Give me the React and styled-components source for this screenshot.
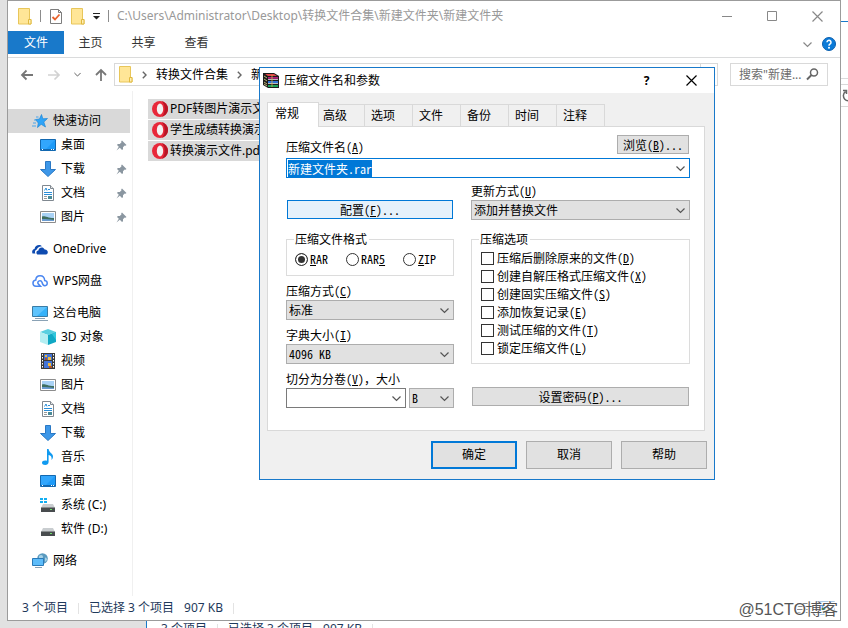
import { useEffect, useRef, useState } from "react";
import styled, { createGlobalStyle, css } from "styled-components";

const GlobalStyle = createGlobalStyle`
  * {
    box-sizing: border-box;
  }
  body {
    margin: 0;
    overflow: hidden;
    font-family: "Noto Sans", "Noto Sans CJK SC", sans-serif;
    font-size: 12px;
    line-height: 16px;
    color: #000;
  }
  button, input, select {
    margin: 0;
    padding: 0;
    border: 0;
    border-radius: 0;
    background: none;
    font: inherit;
    color: inherit;
    outline: none;
  }
  svg {
    display: block;
    flex: none;
  }
`;

/* ---------- icons ---------- */

const FolderIcon = () => (
  <svg width="14" height="17" viewBox="0 0 14 17">
    <path d="M.5.5h11v11h1.500v4.500H.5z" fill="#ffe697" stroke="#e8c65a" />
    <path d="M10.500 16v-4.500h2.500V16z" fill="#ffefb5" stroke="#e0b93f" />
  </svg>
);

const CheckDocIcon = () => (
  <svg width="14" height="17" viewBox="0 0 14 17">
    <path d="M1.500 1.500h8l3 3v11h-11z" fill="#fff" stroke="#7d7d7d" />
    <path d="M9.500 1.500v3h3" fill="none" stroke="#7d7d7d" />
    <path d="M3.500 9l2.500 2.500L10.500 6.500" fill="none" stroke="#e8622c" strokeWidth="1.800" />
  </svg>
);

const MenuCaret = () => (
  <svg width="7" height="8" viewBox="0 0 7 8">
    <path d="M0 1h7v1H0zM0 4h7L3.500 7.500z" fill="#222" />
  </svg>
);

const ArrowIcon = ({ up, color = "#777" }) => (
  <svg width="14" height="14" viewBox="0 0 14 14">
    <path
      d={up ? "M7 13V2M2 7l5-5 5 5" : "M13 7H2M6.500 2.500L2 7l4.500 4.500"}
      fill="none"
      stroke={color}
      strokeWidth="1.800"
    />
  </svg>
);

const ForwardIcon = () => (
  <svg width="14" height="14" viewBox="0 0 14 14">
    <path d="M1 7h11M7.500 2.500L12 7l-4.500 4.500" fill="none" stroke="#d2d2d2" strokeWidth="1.700" />
  </svg>
);

const Chevron = ({ color = "#555", size = 9 }) => (
  <svg width={size} height={size} viewBox="0 0 9 9">
    <path d="M.5 2.500l4 4 4-4" fill="none" stroke={color} strokeWidth="1.200" />
  </svg>
);

const Crumb = () => (
  <svg width="5" height="8" viewBox="0 0 5 8">
    <path d="M.8.8L4 4 .8 7.200" fill="none" stroke="#666" strokeWidth="1.400" />
  </svg>
);

const SearchIcon = () => (
  <svg width="13" height="13" viewBox="0 0 13 13">
    <circle cx="8" cy="4.500" r="3.500" fill="none" stroke="#666" strokeWidth="1.500" />
    <path d="M5.500 7L1 11.500" stroke="#666" strokeWidth="2" />
  </svg>
);

const RefreshIcon = () => (
  <svg width="13" height="13" viewBox="0 0 13 13">
    <path d="M9 2.500a5 5 0 1 1-5.500.2M1 1.500h3.500V5" fill="none" stroke="#666" strokeWidth="1.500" />
  </svg>
);

const HelpIcon = () => (
  <svg width="14" height="14" viewBox="0 0 14 14">
    <circle cx="7" cy="7" r="6.500" fill="#0c7bd8" stroke="#0a5fae" />
    <path d="M5 5.300a2 2 0 1 1 3.200 1.600C7.300 7.500 7 7.800 7 8.700" fill="none" stroke="#fff" strokeWidth="1.500" />
    <circle cx="7" cy="10.700" r="1" fill="#fff" />
  </svg>
);

const PinIcon = () => (
  <svg width="11" height="11" viewBox="0 0 11 11">
    <path d="M6 .5L10.500 5l-1 .8-.8-.3L7 7.200v2l-1 .8-2.200-2.200L.5 10.500l2.300-3.800L1 5l.8-1h2L5.500 2.300 5.200 1.300z" fill="#8a96a0" />
  </svg>
);

const StarIcon = () => (
  <svg width="16" height="16" viewBox="0 0 16 16">
    <path d="M9.500 1.500l1.300 4.300 4.700-.3-3.700 3.500 1.700 5-4.300-2.700L5.500 14.500l.8-4.500L3.500 6.500l4-.5z" fill="#2ea4f8" stroke="#1f86d6" strokeWidth=".7" />
    <path d="M4 4h2.500M2 7h2M1 10h3M0 13h4" stroke="#4aa5ea" />
  </svg>
);

const DesktopIcon = () => (
  <svg width="16" height="16" viewBox="0 0 16 16">
    <path d="M.5 2.500h15v11H.5z" fill="#1e9bf8" stroke="#1268b0" />
    <path d="M1 3l14 0L6 12H1z" fill="#46b2ff" opacity=".5" />
    <path d="M1 12h14v1H1z" fill="#1268b0" />
    <path d="M2 12h1v1H2zM11 12h1v1h-1zM13 12h1v1h-1z" fill="#fff" />
  </svg>
);

const DownloadIcon = () => (
  <svg width="16" height="16" viewBox="0 0 16 16">
    <path d="M5.500.5h5v8h5L8 15.500.5 8.500h5z" fill="#3d97e8" stroke="#2a78c4" />
  </svg>
);

const DocumentIcon = () => (
  <svg width="16" height="16" viewBox="0 0 16 16">
    <path d="M2.500.5h8l3 3v12h-11z" fill="#fff" stroke="#808890" />
    <path d="M10.500.5v3h3" fill="#e8e8e8" stroke="#808890" />
    <path d="M4.500 5.500l1.500-2.500 1 2.500M8 4.500h2M4 7.500h8M4 9.500h8" fill="none" stroke="#2a8ed8" />
    <path d="M4 11.500h3M4 13.500h3" stroke="#999" />
    <path d="M8 11h4v3H8z" fill="#4a8a96" />
  </svg>
);

const PictureIcon = () => (
  <svg width="16" height="16" viewBox="0 0 16 16">
    <path d="M.5 2.500h15v11H.5z" fill="#fff" stroke="#8c8c8c" />
    <path d="M2 4h12v8H2z" fill="#a9d2f5" />
    <path d="M2 7.500c3-1 5 1.500 12 1.500v2H2z" fill="#3f6f60" />
    <path d="M2 10c4 0 8 0 12 1v1H2z" fill="#6a9bd0" />
  </svg>
);

const OneDriveIcon = () => (
  <svg width="16" height="16" viewBox="0 0 16 16">
    <path d="M.5 12.500c-1-2.500.2-4.300 2-4.600C3 4.500 7.500 2.600 10 5.300 6 5.500 5 8 5 8.600c-2 .4-2.500 2.400-1.600 3.900z" fill="#0e4bb0" />
    <path d="M6 13.500c-2-.2-2.400-3.500.4-3.900C6.800 6.300 11 5 12.700 8.600c3.600-.1 4.100 4.500 1.300 4.900z" fill="#0e4bb0" />
  </svg>
);

const WpsIcon = () => (
  <svg width="16" height="16" viewBox="0 0 16 16">
    <path d="M4 13.200h4.500L6 10.500C5 8 9 6.500 10 9.200c.5 2 1 3.800 3 3.500 3-.5 3-4.700-.3-5.200C12.300 1 4 1.300 3.800 7 0 7.500 0 13 4 13.200z" fill="none" stroke="#4a86f0" strokeWidth="1.500" />
  </svg>
);

const ComputerIcon = () => (
  <svg width="16" height="16" viewBox="0 0 16 16">
    <path d="M.5 1.500h15v10H.5z" fill="#35b2fa" stroke="#3a7ca5" />
    <path d="M1 2h14L5 11H1z" fill="#7cd0ff" opacity=".6" />
    <path d="M3 13.500h10M0 15.500h16" stroke="#8aa2b5" />
  </svg>
);

const CubeIcon = () => (
  <svg width="16" height="16" viewBox="0 0 16 16">
    <path d="M0 3l8-3 8 3-8 3z" fill="#59cfe0" />
    <path d="M0 3l8 3v10l-8-3z" fill="#b4eef2" />
    <path d="M16 3L8 6v10l8-3z" fill="#10a8c4" />
    <path d="M12 5l4-2v8z" fill="#30c6dc" />
  </svg>
);

const VideoIcon = () => (
  <svg width="16" height="16" viewBox="0 0 16 16">
    <path d="M1 0h14v16H1z" fill="#3a3a3a" />
    <path d="M2.500 1v14M13.500 1v14" stroke="#fff" strokeDasharray="1.500 1.500" />
    <path d="M4 1h8v6H4zM4 8h8v7H4z" fill="#4274d8" />
    <path d="M5 2h2v2H5zM8 4h3v3H8zM8 10h3v3H8z" fill="#f0b93c" />
    <path d="M5 5h2v2H5zM9 13h3v2H9z" fill="#b0552c" />
  </svg>
);

const MusicIcon = () => (
  <svg width="16" height="16" viewBox="0 0 16 16">
    <path d="M7 0h1.600c.4 4 4.400 4 4.400 7.500 0 1.500-.6 2.800-1.500 3.500.6-3-.6-4.600-2.900-5V13c0 2-1.600 3-3.400 3C3.500 16 2 15 2 13.700 2 11.800 4.500 11 7 11.700z" fill="#109af0" />
  </svg>
);

const DriveIcon = ({ system }) => (
  <svg width="16" height="16" viewBox="0 0 16 16">
    <path d="M3 7h10l2 4H1z" fill="#c9cdd0" />
    <path d="M1 10.500h14v4.500H1z" fill="#484c4e" />
    <path d="M10 12h2v1h-2z" fill="#6ee06a" />
    {system && <path d="M0 1h3v2H0zM4 1h3v2H4zM0 4h3v2H0zM4 4h3v2H4z" fill="#12aef2" />}
  </svg>
);

const NetworkIcon = () => (
  <svg width="16" height="16" viewBox="0 0 16 16">
    <circle cx="10.500" cy="5.500" r="5.300" fill="#5a9abf" />
    <path d="M7 3c2-2 4-1 4 1s-3 3-4 2zM13 5c1-1 2 0 2 2l-2 2z" fill="#a8d2e6" />
    <path d="M.5 5.500h11v7H.5z" fill="#5dbcfa" stroke="#2a7ab8" />
    <path d="M3 14.500h7" stroke="#8aa2b5" />
  </svg>
);

const OperaIcon = () => (
  <svg width="16" height="16" viewBox="0 0 16 16">
    <circle cx="8" cy="8" r="8" fill="#e8283a" />
    <path d="M10 .3c8 2.700 8 12.700 0 15.400 3.500-4 3.500-11.400 0-15.400z" fill="#b81526" />
    <ellipse cx="8" cy="8" rx="3.200" ry="5.400" fill="#f2f2f2" />
  </svg>
);

const RarIcon = () => (
  <svg width="16" height="16" viewBox="0 0 16 16">
    <path d="M0 0h11l5 3v12H5L0 12z" fill="#1c1c1c" />
    <path d="M2 1h9l3 2H5z" fill="#e04848" />
    <path d="M5 4h10v1.800H5z" fill="#b0207c" />
    <path d="M5 8h10v2H5z" fill="#2f70d4" />
    <path d="M5 12h10v2H5z" fill="#18a058" />
    <path d="M5 6h10v.8H5zM5 10.200h10v.8H5z" fill="#eee" />
    <path d="M1 3l3 2M1 6l3 2M1 9l3 2M1 11l3 2" stroke="#e8dc8c" strokeWidth=".8" />
    <path d="M8 2h2v12H8z" fill="#d8b04c" opacity=".4" />
  </svg>
);

const CloseIcon = ({ color, size = 11 }) => (
  <svg width={size} height={size} viewBox="0 0 11 11">
    <path d="M.5.5l10 10M10.500.5l-10 10" stroke={color} strokeWidth="1.200" />
  </svg>
);

const MinimizeIcon = () => (
  <svg width="11" height="11" viewBox="0 0 11 11">
    <path d="M0 5.500h10" stroke="#888" />
  </svg>
);

const MaximizeIcon = () => (
  <svg width="11" height="11" viewBox="0 0 11 11">
    <path d="M.5.5h9v9h-9z" fill="none" stroke="#888" />
  </svg>
);

const ViewIcons = () => (
  <svg width="40" height="14" viewBox="0 0 40 14">
    <path d="M1 2.500h11M1 5.500h11M1 8.500h11M1 11.500h11" stroke="#8a8a8a" />
    <path d="M20.500.5h18v13h-18z" fill="#e5f3ff" stroke="#a9c9e6" />
    <path d="M23 3h10v6H23z" fill="#5a98d4" />
    <path d="M23 7h10v2H23z" fill="#3f7d58" />
  </svg>
);

/* ---------- desktop and windows ---------- */

const Desktop = styled.div`
  position: relative;
  height: 100vh;
  overflow: hidden;
  background: linear-gradient(to right, #e1e1e1 50%, #fff 50%);
`;

const ExplorerWindow = styled.div`
  position: absolute;
  top: 0;
  right: 7px;
  bottom: 7px;
  left: 7px;
  display: flex;
  flex-direction: column;
  background: #fff;
  border: 1px solid #9b9b9b;
  ${({ $back }) =>
    $back &&
    css`
      top: 21px;
      right: -132px;
      bottom: -14px;
      left: 146px;
      border-color: #1979ca;
    `}
`;

const TitleBar = styled.div`
  display: flex;
  align-items: center;
  height: 30px;
  padding-left: 10px;
  color: #999;
`;

const QuickTools = styled.div`
  display: flex;
  align-items: center;
  gap: 8px;
  margin-right: 8px;
`;

const Rule = styled.span`
  width: 1px;
  height: ${({ $height = 12 }) => $height}px;
  background: ${({ $color = "#8c8c8c" }) => $color};
`;

const WindowButtons = styled.div`
  display: flex;
  margin-left: auto;
`;

const WindowButton = styled.button`
  display: flex;
  align-items: center;
  justify-content: center;
  width: 45px;
  height: 28px;
`;

const Ribbon = styled.div`
  display: flex;
  height: 27px;
  padding-right: 4px;
  border-bottom: 1px solid #dadbdc;
`;

const RibbonTab = styled.button`
  width: 53px;
  height: 23px;
  padding: 1px 0 0;
  color: #333;
  ${({ $active }) =>
    $active &&
    css`
      width: 56px;
      color: #fff;
      background: #1979ca;
    `}
`;

const RibbonEnd = styled.div`
  display: flex;
  align-items: center;
  gap: 10px;
  margin-left: auto;
`;

const IconButton = styled.button`
  display: flex;
  align-items: center;
`;

const AddressRow = styled.div`
  display: flex;
  gap: 12px;
  height: 28px;
  margin-top: 5px;
  padding: 0 12px 5px;
`;

const NavButtons = styled.div`
  display: flex;
  align-items: center;
  justify-content: space-between;
  width: 88px;
  margin-right: -6px;
`;

const AddressBox = styled.div`
  display: flex;
  flex: 1;
  align-items: center;
  padding-left: 4px;
  overflow: hidden;
  white-space: nowrap;
  border: 1px solid #d9d9d9;
`;

const Crumbs = styled.div`
  display: flex;
  flex: 1;
  align-items: center;
  gap: 9px;
`;

const RefreshButton = styled(IconButton)`
  justify-content: center;
  width: 17px;
  height: 100%;
  border-left: 1px solid #d9d9d9;
`;

const SearchBox = styled.label`
  display: flex;
  align-items: center;
  width: 98px;
  padding: 0 8px;
  border: 1px solid #d9d9d9;

  input {
    flex: 1;
    min-width: 0;
    text-overflow: ellipsis;
  }
  input::placeholder {
    color: #6d6d6d;
  }
`;

const Content = styled.div`
  display: flex;
  flex: 1;
  min-height: 0;
`;

const Sidebar = styled.nav`
  display: flex;
  flex-direction: column;
  gap: 8px;
  width: 125px;
  padding: 18px 2px 0 0;
  border-right: 1px solid #f0f0f0;
`;

const NavGroup = styled.div`
  display: flex;
  flex-direction: column;
`;

const NavItem = styled.a`
  display: flex;
  align-items: center;
  gap: 5px;
  height: 24px;
  padding: 0 3px 0 ${({ $child }) => ($child ? 32 : 24)}px;
  color: inherit;
  text-decoration: none;
  white-space: nowrap;
  background: ${({ $active }) => ($active ? "#d9d9d9" : "none")};

  svg:nth-of-type(2) {
    margin-left: auto;
  }
`;

const FileList = styled.div`
  display: flex;
  flex: 1;
  flex-direction: column;
  gap: 1px;
  padding: 8px 15px;
`;

const FileRow = styled.button`
  display: flex;
  align-items: center;
  gap: 2px;
  width: 160px;
  height: 20px;
  padding-left: 4px;
  white-space: nowrap;
  background: #d9d9d9;
`;

const StatusBar = styled.div`
  display: flex;
  align-items: center;
  gap: 10px;
  height: 24px;
  margin-top: auto;
  padding: 0 4px 0 14px;
  color: #1e395b;

  svg {
    margin-left: auto;
  }
`;

const Watermark = styled.div`
  position: absolute;
  right: 10px;
  bottom: 8px;
  font-family: "Liberation Sans", "Noto Sans CJK SC", sans-serif;
  font-size: 16px;
  line-height: 20px;
  color: #555;
  text-shadow: 1px 1px 0 #fff, -1px -1px 0 #fff;
`;

/* ---------- archive dialog ---------- */

const DialogWindow = styled.div`
  position: absolute;
  top: 67px;
  left: 259px;
  width: 456px;
  background: #f0f0f0;
  border: 1px solid #1979ca;
`;

const DialogTitle = styled.div`
  display: flex;
  align-items: center;
  gap: 5px;
  height: 25px;
  padding-left: 3px;
  background: #fff;
`;

const DialogBody = styled.div`
  display: flex;
  flex-direction: column;
  padding: 9px 9px 10px 7px;
`;

const TabList = styled.div`
  display: flex;
  align-items: flex-end;
  height: 24px;
`;

const Tab = styled.button`
  width: 49px;
  height: 22px;
  margin-right: -1px;
  padding-left: 6px;
  text-align: left;
  border: 1px solid #d9d9d9;
  border-bottom: 0;
  ${({ $active }) =>
    $active &&
    css`
      z-index: 1;
      width: 52px;
      height: 25px;
      margin: 0 -3px -1px 0;
      padding: 0 0 2px 7px;
      background: #fff;
    `}
`;

const Pane = styled.div`
  padding: 8px 14px 22px 18px;
  font-family: "Noto Sans CJK SC", sans-serif;
  font-feature-settings: "hwid";
  line-height: 14px;
  background: #fff;
  border: 1px solid #d9d9d9;
`;

const FullWidth = styled.span`
  font-feature-settings: normal;
`;

const NameRow = styled.div`
  display: flex;
  align-items: flex-end;
  justify-content: space-between;
  margin-bottom: 4px;
  padding-right: 1px;
`;

const Columns = styled.div`
  display: grid;
  grid-template-columns: 168px 1fr;
  gap: 17px;
`;

const Column = styled.div`
  display: flex;
  flex-direction: column;
  padding-top: 6px;
`;

const Field = styled.div`
  display: flex;
  flex-direction: column;
  gap: 2px;
  margin-top: ${({ $space = 8 }) => $space}px;
`;

const PushButton = styled.button`
  height: 19px;
  padding: 0 5px;
  line-height: 14px;
  background: #e1e1e1;
  border: 1px solid #adadad;
  ${({ $hot }) =>
    $hot &&
    css`
      margin: 16px 1px 13px;
      background: #e5f1fb;
      border-color: #0078d7;
    `}
`;

const PasswordButton = styled(PushButton)`
  margin: 23px 1px 0;
`;

const Combo = styled.div`
  display: grid;
  flex: ${({ $grow }) => ($grow ? "1" : "none")};
  width: ${({ $width }) => ($width ? `${$width}px` : "auto")};
  align-items: center;
  height: 20px;
  background: ${({ $editable }) => ($editable ? "#fff" : "#e1e1e1")};
  border: 1px solid ${({ $color = "#adadad" }) => $color};

  select, input, svg, button {
    grid-area: 1 / 1;
  }
  select, input {
    width: 100%;
    height: 18px;
    padding-left: 2px;
    appearance: none;
  }
  input {
    padding-left: 1px;
  }
  input::selection {
    color: #fff;
    background: #0078d7;
  }
  svg, button {
    justify-self: end;
    margin-right: 4px;
  }
  button svg {
    margin: 0;
  }
  svg {
    pointer-events: none;
  }
`;

const Group = styled.fieldset`
  min-width: 0;
  height: ${({ $height }) => $height}px;
  margin: 0;
  padding: 0 7px;
  border: 1px solid #dcdcdc;

  legend {
    padding: 0 2px 0 1px;
  }
`;

const Radios = styled.div`
  display: flex;
  gap: 18px;
  margin: 6px 1px 0;
`;

const Choice = styled.label`
  display: flex;
  align-items: center;
  gap: ${({ $gap = 2 }) => $gap}px;
  height: ${({ $height = 14 }) => $height}px;
  white-space: nowrap;

  input {
    flex: none;
    width: 13px;
    height: 13px;
    background: #fff;
    border: 1px solid #333;
    appearance: none;
  }
  input[type="radio"] {
    border-radius: 50%;
  }
  input:checked {
    background: #333;
    box-shadow: inset 0 0 0 2px #fff;
  }
`;

const Checks = styled.div`
  display: flex;
  flex-direction: column;
  margin: 3px 2px 0;
`;

const SplitRow = styled.div`
  display: flex;
  gap: 3px;
`;

const Footer = styled.div`
  display: flex;
  justify-content: flex-end;
  gap: 9px;
  margin: 10px -2px 0 0;
`;

const FooterButton = styled.button`
  width: 86px;
  height: 28px;
  background: #e1e1e1;
  border: ${({ $primary }) => ($primary ? "2px solid #0078d7" : "1px solid #adadad")};
`;

const navGroups = [
  [
    { label: "快速访问", icon: <StarIcon />, active: true },
    { label: "桌面", icon: <DesktopIcon />, child: true, pinned: true },
    { label: "下载", icon: <DownloadIcon />, child: true, pinned: true },
    { label: "文档", icon: <DocumentIcon />, child: true, pinned: true },
    { label: "图片", icon: <PictureIcon />, child: true, pinned: true },
  ],
  [{ label: "OneDrive", icon: <OneDriveIcon /> }],
  [{ label: "WPS网盘", icon: <WpsIcon /> }],
  [
    { label: "这台电脑", icon: <ComputerIcon /> },
    { label: "3D 对象", icon: <CubeIcon />, child: true },
    { label: "视频", icon: <VideoIcon />, child: true },
    { label: "图片", icon: <PictureIcon />, child: true },
    { label: "文档", icon: <DocumentIcon />, child: true },
    { label: "下载", icon: <DownloadIcon />, child: true },
    { label: "音乐", icon: <MusicIcon />, child: true },
    { label: "桌面", icon: <DesktopIcon />, child: true },
    { label: "系统 (C:)", icon: <DriveIcon system />, child: true },
    { label: "软件 (D:)", icon: <DriveIcon />, child: true },
  ],
  [{ label: "网络", icon: <NetworkIcon /> }],
];

const files = ["PDF转图片演示文件.pdf", "学生成绩转换演示.pdf", "转换演示文件.pdf"];

const tabs = ["常规", "高级", "选项", "文件", "备份", "时间", "注释"];

const formats = [
  { value: "rar", label: <><u>R</u>AR</> },
  { value: "rar5", label: <>RAR<u>5</u></> },
  { value: "zip", label: <><u>Z</u>IP</> },
];

const options = [
  ["压缩后删除原来的文件", "D"],
  ["创建自解压格式压缩文件", "X"],
  ["创建固实压缩文件", "S"],
  ["添加恢复记录", "E"],
  ["测试压缩的文件", "T"],
  ["锁定压缩文件", "L"],
];

// Caption with its underlined access key, e.g. 配置(F)...
const Caption = ({ text, hotkey, after }) => (
  <>
    {text}(<u>{hotkey}</u>){after}
  </>
);

const Select = ({ id, value, label, ...rest }) => (
  <Combo {...rest}>
    <select id={id} aria-label={label} defaultValue={value}>
      <option>{value}</option>
    </select>
    <Chevron />
  </Combo>
);

const Status = () => (
  <>
    <span>3 个项目</span>
    <Rule $height={11} $color="#e3e3e3" />
    <span>已选择 3 个项目</span>
    <span>907 KB</span>
    <Rule $height={11} $color="#e3e3e3" />
  </>
);

const Explorer = () => (
  <ExplorerWindow>
    <TitleBar>
      <QuickTools>
        <FolderIcon />
        <Rule />
        <CheckDocIcon />
        <FolderIcon />
        <MenuCaret />
        <Rule />
      </QuickTools>
      <span>C:\Users\Administrator\Desktop\转换文件合集\新建文件夹\新建文件夹</span>
      <WindowButtons>
        <WindowButton aria-label="最小化"><MinimizeIcon /></WindowButton>
        <WindowButton aria-label="最大化"><MaximizeIcon /></WindowButton>
        <WindowButton aria-label="关闭"><CloseIcon color="#888" /></WindowButton>
      </WindowButtons>
    </TitleBar>
    <Ribbon>
      <RibbonTab $active>文件</RibbonTab>
      <RibbonTab>主页</RibbonTab>
      <RibbonTab>共享</RibbonTab>
      <RibbonTab>查看</RibbonTab>
      <RibbonEnd>
        <IconButton aria-label="展开功能区"><Chevron color="#888" /></IconButton>
        <IconButton aria-label="帮助"><HelpIcon /></IconButton>
      </RibbonEnd>
    </Ribbon>
    <AddressRow>
      <NavButtons>
        <IconButton aria-label="后退"><ArrowIcon /></IconButton>
        <IconButton aria-label="前进"><ForwardIcon /></IconButton>
        <IconButton aria-label="最近位置"><Chevron size={7} /></IconButton>
        <IconButton aria-label="上移"><ArrowIcon up /></IconButton>
      </NavButtons>
      <AddressBox>
        <Crumbs>
          <FolderIcon />
          <Crumb />
          <span>转换文件合集</span>
          <Crumb />
          <span>新建文件夹</span>
        </Crumbs>
        <RefreshButton aria-label="刷新"><RefreshIcon /></RefreshButton>
      </AddressBox>
      <SearchBox>
        <input aria-label="搜索" placeholder={'搜索"新建...'} />
        <SearchIcon />
      </SearchBox>
    </AddressRow>
    <Content>
      <Sidebar>
        {navGroups.map((group, i) => (
          <NavGroup key={i}>
            {group.map((item) => (
              <NavItem key={item.label} href="#" $child={item.child} $active={item.active}>
                {item.icon}
                {item.label}
                {item.pinned && <PinIcon />}
              </NavItem>
            ))}
          </NavGroup>
        ))}
      </Sidebar>
      <FileList>
        {files.map((name) => (
          <FileRow key={name}>
            <OperaIcon />
            {name}
          </FileRow>
        ))}
      </FileList>
    </Content>
    <StatusBar>
      <Status />
      <ViewIcons />
    </StatusBar>
  </ExplorerWindow>
);

const BackExplorer = () => (
  <ExplorerWindow $back>
    <TitleBar />
    <Ribbon />
    <AddressRow>
      <NavButtons />
      <AddressBox>
        <Crumbs />
        <RefreshButton aria-label="刷新"><RefreshIcon /></RefreshButton>
      </AddressBox>
      <SearchBox />
    </AddressRow>
    <StatusBar>
      <Status />
    </StatusBar>
  </ExplorerWindow>
);

const ArchiveDialog = () => {
  const nameRef = useRef(null);
  const [format, setFormat] = useState("rar");

  useEffect(() => {
    nameRef.current.focus();
    nameRef.current.select();
  }, []);

  return (
    <DialogWindow role="dialog" aria-label="压缩文件名和参数">
      <DialogTitle>
        <RarIcon />
        <span>压缩文件名和参数</span>
        <WindowButtons>
          <WindowButton aria-label="帮助"><b>?</b></WindowButton>
          <WindowButton aria-label="关闭"><CloseIcon color="#000" /></WindowButton>
        </WindowButtons>
      </DialogTitle>
      <DialogBody>
        <TabList role="tablist">
          {tabs.map((tab, i) => (
            <Tab key={tab} role="tab" aria-selected={i === 0} $active={i === 0}>
              {tab}
            </Tab>
          ))}
        </TabList>
        <Pane>
          <NameRow>
            <label htmlFor="name"><Caption text="压缩文件名" hotkey="A" /></label>
            <PushButton><Caption text="浏览" hotkey="B" after="..." /></PushButton>
          </NameRow>
          <Combo $editable $color="#0078d7">
            <input id="name" ref={nameRef} defaultValue="新建文件夹.rar" />
            <button aria-label="历史记录"><Chevron /></button>
          </Combo>
          <Columns>
            <Column>
              <PushButton $hot><Caption text="配置" hotkey="F" after="..." /></PushButton>
              <Group $height={44}>
                <legend>压缩文件格式</legend>
                <Radios>
                  {formats.map(({ value, label }) => (
                    <Choice key={value}>
                      <input
                        type="radio"
                        name="format"
                        checked={format === value}
                        onChange={() => setFormat(value)}
                      />
                      <span>{label}</span>
                    </Choice>
                  ))}
                </Radios>
              </Group>
              <Field>
                <label htmlFor="method"><Caption text="压缩方式" hotkey="C" /></label>
                <Select id="method" value="标准" />
              </Field>
              <Field>
                <label htmlFor="dictionary"><Caption text="字典大小" hotkey="I" /></label>
                <Select id="dictionary" value="4096 KB" />
              </Field>
              <Field>
                <label htmlFor="volume">
                  <Caption text="切分为分卷" hotkey="V" after={<FullWidth>，大小</FullWidth>} />
                </label>
                <SplitRow>
                  <Combo $editable $grow $color="#7a7a7a">
                    <input id="volume" />
                    <button aria-label="分卷大小"><Chevron /></button>
                  </Combo>
                  <Select label="单位" value="B" $width={45} />
                </SplitRow>
              </Field>
            </Column>
            <Column>
              <Field $space={0}>
                <label htmlFor="update"><Caption text="更新方式" hotkey="U" /></label>
                <Select id="update" value="添加并替换文件" />
              </Field>
              <Field $space={12}>
                <Group $height={132}>
                  <legend>压缩选项</legend>
                  <Checks>
                    {options.map(([text, hotkey]) => (
                      <Choice key={hotkey} $height={18} $gap={3}>
                        <input type="checkbox" />
                        <span><Caption text={text} hotkey={hotkey} /></span>
                      </Choice>
                    ))}
                  </Checks>
                </Group>
              </Field>
              <PasswordButton><Caption text="设置密码" hotkey="P" after="..." /></PasswordButton>
            </Column>
          </Columns>
        </Pane>
        <Footer>
          <FooterButton $primary>确定</FooterButton>
          <FooterButton>取消</FooterButton>
          <FooterButton>帮助</FooterButton>
        </Footer>
      </DialogBody>
    </DialogWindow>
  );
};

export default function App() {
  return (
    <>
      <GlobalStyle />
      <Desktop>
        <BackExplorer />
        <Explorer />
        <ArchiveDialog />
        <Watermark>@51CTO博客</Watermark>
      </Desktop>
    </>
  );
}
